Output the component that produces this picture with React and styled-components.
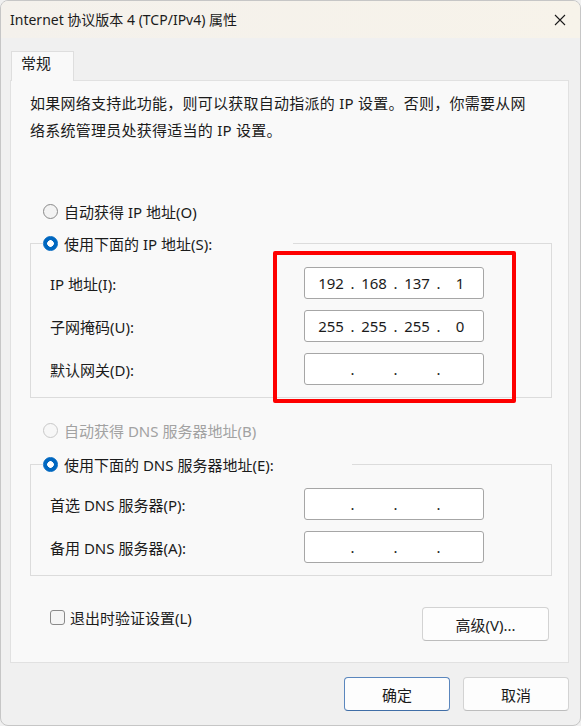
import React from 'react';
import styled, { createGlobalStyle } from 'styled-components';

const GlobalStyle = createGlobalStyle`
  html, body {
    margin: 0;
    padding: 0;
    background: #f0f0f0;
  }
  body {
    font-family: "Noto Sans", "Noto Sans CJK SC", sans-serif;
    color: #1b1b1b;
  }
`;

const Window = styled.div`
  position: relative;
  width: 581px;
  height: 726px;
  box-sizing: border-box;
  border: 1px solid #c6c6c6;
  border-radius: 8px;
  background: #f0f0f0;
  display: flex;
  flex-direction: column;
  overflow: hidden;
`;

const TitleBar = styled.div`
  height: 37px;
  flex-shrink: 0;
  display: flex;
  align-items: center;
  justify-content: space-between;
  padding-left: 9px;
  background: linear-gradient(to right, #f4f1ec, #f7f3ea);
`;

const Title = styled.span`
  font-size: 14px;
  margin-top: -2px;
`;

const CloseButton = styled.div`
  width: 40px;
  height: 37px;
  display: flex;
  align-items: center;
  justify-content: center;
`;

const Body = styled.div`
  flex: 1;
  display: flex;
  flex-direction: column;
  padding: 13px 11px 0 9px;
`;

const TabStrip = styled.div`
  display: flex;
  padding-left: 1px;
`;

const Tab = styled.div`
  position: relative;
  z-index: 1;
  width: 63px;
  height: 30px;
  box-sizing: border-box;
  margin-bottom: -1px;
  padding: 0 0 0 9px;
  border: 1px solid #dedede;
  border-bottom: none;
  background: #f9f9f9;
  font-size: 15px;
  line-height: 23px;
`;

const Panel = styled.div`
  height: 583px;
  box-sizing: border-box;
  border: 1px solid #e1e1e1;
  background: #f9f9f9;
  padding: 0 16px 0 19px;
  display: flex;
  flex-direction: column;
  font-size: 15px;
`;

const Intro = styled.p`
  margin: 9px 0 0;
  line-height: 27px;
  white-space: nowrap;
  letter-spacing: 0.25px;
`;

const OptionRow = styled.label`
  display: flex;
  align-items: center;
  gap: 6px;
  height: 22px;
  margin: ${p => p.$top || 0}px 0 0 13px;
  color: ${p => (p.$disabled ? '#a2a2a2' : 'inherit')};
`;

const Radio = styled.span`
  width: 15px;
  height: 15px;
  box-sizing: border-box;
  border-radius: 50%;
  flex-shrink: 0;
  border: 1px solid ${p => (p.$checked ? '#0067c0' : p.$disabled ? '#c8c8c8' : '#8a8a8a')};
  background: ${p =>
    p.$checked
      ? 'radial-gradient(circle, #ffffff 0 3px, #0067c0 3.6px)'
      : p.$disabled ? '#f7f7f7' : '#f3f3f3'};
`;

const Group = styled.fieldset`
  margin: ${p => p.$top}px 0 0;
  padding: 13px 0 12px 19px;
  border: 1px solid #dcdcdc;
  min-width: 0;
`;

const Legend = styled.legend`
  width: ${p => p.$width}px;
  padding: 0;
  margin-left: -7px;
`;

const LegendOption = styled(OptionRow)`
  margin: 0;
`;

const Fields = styled.div`
  display: flex;
  flex-direction: column;
  gap: 11px;
`;

const FieldRow = styled.div`
  display: flex;
  align-items: center;
  height: 32px;
`;

const FieldLabel = styled.span`
  width: 254px;
`;

const IpBox = styled.div`
  width: 180px;
  height: 32px;
  box-sizing: border-box;
  padding-left: 8px;
  display: flex;
  align-items: center;
  background: #ffffff;
  border: 1px solid #a6a6a6;
  border-radius: 3px;
`;

const Octet = styled.span`
  width: 36px;
  text-align: center;
`;

const Dot = styled.span`
  width: 7px;
  text-align: center;
`;

const BottomRow = styled.div`
  display: flex;
  justify-content: space-between;
  align-items: flex-start;
  margin-top: 30px;
  padding-right: 3px;
`;

const CheckRow = styled.label`
  display: flex;
  align-items: center;
  gap: 5px;
  height: 22px;
  margin-left: 20px;
`;

const CheckBox = styled.span`
  width: 15px;
  height: 15px;
  box-sizing: border-box;
  border: 1px solid #8a8a8a;
  border-radius: 3px;
  background: #f5f5f5;
`;

const Button = styled.button`
  width: ${p => p.$width || 106}px;
  height: 34px;
  margin-top: ${p => p.$top || 0}px;
  box-sizing: border-box;
  border: 1px solid ${p => (p.$primary ? '#5a86bd' : '#d3d3d3')};
  border-bottom-color: ${p => (p.$primary ? '#3f6da6' : '#bdbdbd')};
  border-radius: 4px;
  background: #fdfdfd;
  font-family: inherit;
  font-size: 15px;
  color: #1b1b1b;
  padding: 0;
`;

const Footer = styled.div`
  display: flex;
  justify-content: flex-end;
  gap: 13px;
  padding: 14px 0 0;
`;

const Highlight = styled.div`
  position: absolute;
  left: 272px;
  top: 250px;
  width: 243px;
  height: 152px;
  box-sizing: border-box;
  border: 4px solid #fe0000;
  border-radius: 2px;
  pointer-events: none;
`;

const IpField = ({ value = ['', '', '', ''] }) => (
  <IpBox>
    {value.map((v, i) => (
      <React.Fragment key={i}>
        <Octet>{v}</Octet>
        {i < 3 && <Dot>.</Dot>}
      </React.Fragment>
    ))}
  </IpBox>
);

const ipRows = [
  { label: 'IP 地址(I):', value: ['192', '168', '137', '1'] },
  { label: '子网掩码(U):', value: ['255', '255', '255', '0'] },
  { label: '默认网关(D):' },
];

const dnsRows = [
  { label: '首选 DNS 服务器(P):' },
  { label: '备用 DNS 服务器(A):' },
];

const App = () => (
  <>
    <GlobalStyle />
    <Window>
      <TitleBar>
        <Title>Internet 协议版本 4 (TCP/IPv4) 属性</Title>
        <CloseButton>
          <svg width="12" height="12" viewBox="0 0 12 12">
            <path d="M1 1 L11 11 M11 1 L1 11" stroke="#1b1b1b" strokeWidth="1.1" fill="none" />
          </svg>
        </CloseButton>
      </TitleBar>
      <Body>
        <TabStrip>
          <Tab>常规</Tab>
        </TabStrip>
        <Panel>
          <Intro>
            如果网络支持此功能，则可以获取自动指派的 IP 设置。否则，你需要从网
            <br />
            络系统管理员处获得适当的 IP 设置。
          </Intro>

          <OptionRow $top={56}>
            <Radio />
            自动获得 IP 地址(O)
          </OptionRow>
          <Group $top={10}>
            <Legend $width={250}>
              <LegendOption>
                <Radio $checked />
                使用下面的 IP 地址(S):
              </LegendOption>
            </Legend>
            <Fields>
              {ipRows.map(r => (
                <FieldRow key={r.label}>
                  <FieldLabel>{r.label}</FieldLabel>
                  <IpField value={r.value} />
                </FieldRow>
              ))}
            </Fields>
          </Group>

          <OptionRow $top={21} $disabled>
            <Radio $disabled />
            自动获得 DNS 服务器地址(B)
          </OptionRow>
          <Group $top={12}>
            <Legend $width={309}>
              <LegendOption>
                <Radio $checked />
                使用下面的 DNS 服务器地址(E):
              </LegendOption>
            </Legend>
            <Fields>
              {dnsRows.map(r => (
                <FieldRow key={r.label}>
                  <FieldLabel>{r.label}</FieldLabel>
                  <IpField />
                </FieldRow>
              ))}
            </Fields>
          </Group>

          <BottomRow>
            <CheckRow>
              <CheckBox />
              退出时验证设置(L)
            </CheckRow>
            <Button $width={127} $top={1}>高级(V)...</Button>
          </BottomRow>
        </Panel>
        <Footer>
          <Button $primary>确定</Button>
          <Button>取消</Button>
        </Footer>
      </Body>
      <Highlight />
    </Window>
  </>
);

export default App;
